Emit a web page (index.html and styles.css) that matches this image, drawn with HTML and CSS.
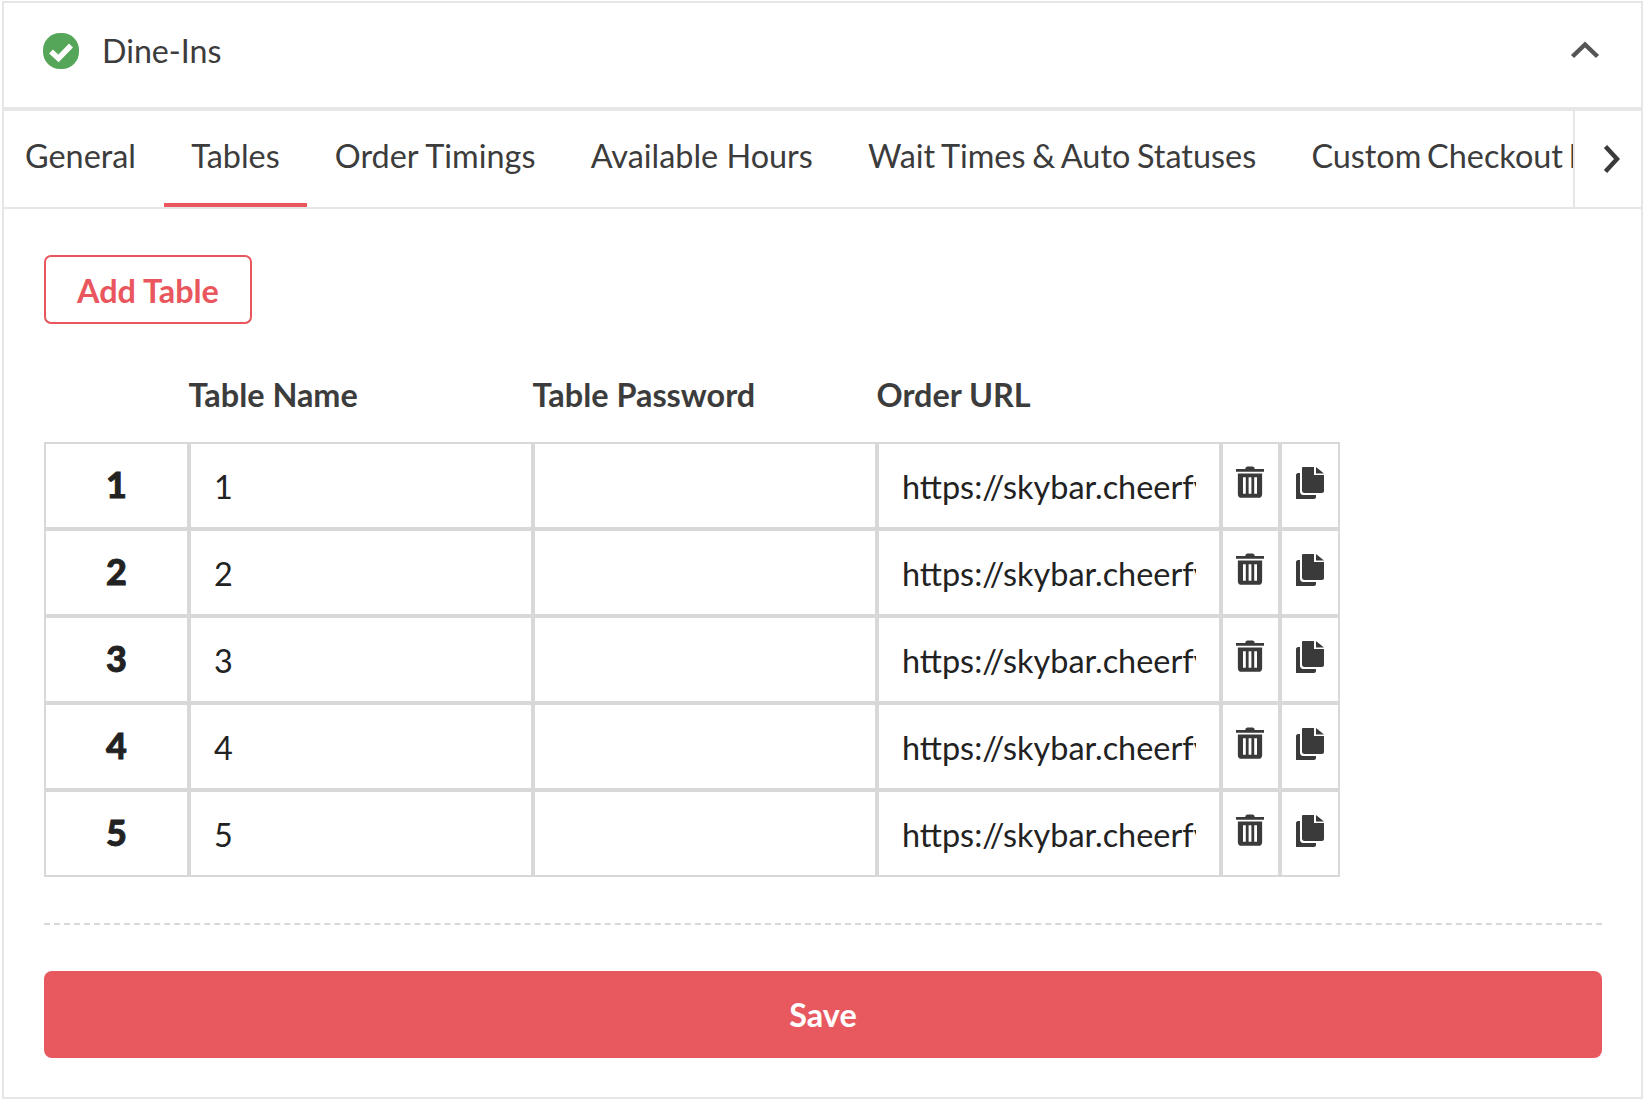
FILE: index.html
```html
<!DOCTYPE html>
<html lang="en">

<head>
    <meta charset="UTF-8">
    <title>Dine-Ins</title>
    <link rel="stylesheet" href="styles.css">
</head>

<body>
    <svg class="icon-defs" width="0" height="0">
        <symbol id="trash" viewBox="0 0 30 34">
            <path d="M10 3 C10 1.500 11 0.500 12.500 0.500 H17.500 C19 0.500 20 1.500 20 3 H30 V6 H0 V3 Z" />
            <path fill-rule="evenodd" d="M2 8 H28 V30 C28 32.500 26.500 34 24 34 H6 C3.500 34 2 32.500 2 30 Z M7.500 12 V29.500 H10.500 V12 Z M13.500 12 V29.500 H16.500 V12 Z M19.500 12 V29.500 H22.500 V12 Z" />
        </symbol>
        <symbol id="copy" viewBox="0 0 28 32">
            <path d="M7 0 H18 V8 H28 V24 C28 25 27 26 26 26 H8.500 C7 26 6 25 6 23.500 V1 C6 0.500 6.500 0 7 0 Z" />
            <path d="M20 0 L28 6.500 H20 Z" />
            <path d="M0 8 C0 7 1 6 2 6 H4 V25 C4 26.500 5.500 28 7 28 H20 V30 C20 31 19 32 18 32 H0 Z" />
        </symbol>
    </svg>

    <div class="card">
        <div class="card-header">
            <svg class="check-icon" viewBox="0 0 36 36">
                <rect width="36" height="36" rx="17" fill="#55a658" />
                <path d="M8 18.500 L15.500 25.500 L28 12.500" fill="none" stroke="#fff" stroke-width="5.500" />
            </svg>
            <span class="card-title">Dine-Ins</span>
            <svg class="chevron-up" viewBox="0 0 30 18">
                <path d="M2.500 15.500 L15 3.500 L27.500 15.500" fill="none" stroke="#555" stroke-width="4.500" />
            </svg>
        </div>

        <div class="tabs">
            <div class="tab-list">
                <a class="tab">General</a>
                <a class="tab active">Tables</a>
                <a class="tab">Order Timings</a>
                <a class="tab">Available Hours</a>
                <a class="tab tab-tight">Wait Times &amp; Auto Statuses</a>
                <a class="tab tab-tight">Custom Checkout Fields</a>
            </div>
            <div class="tab-next">
                <svg viewBox="0 0 18 30">
                    <path d="M3.500 2.500 L15 15 L3.500 27.500" fill="none" stroke="#3a3a3a" stroke-width="4.500" />
                </svg>
            </div>
        </div>

        <div class="card-body">
            <button type="button" class="add-button">Add Table</button>

            <div class="table-head">
                <span class="col-name">Table Name</span>
                <span class="col-password">Table Password</span>
                <span class="col-url">Order URL</span>
            </div>

            <div class="table-rows">
                <div class="table-row">
                    <div class="cell cell-num">1</div>
                    <div class="cell col-name"><input type="text" value="1"></div>
                    <div class="cell col-password"><input type="text"></div>
                    <div class="cell col-url"><input type="text" value="https://skybar.cheerfy.com/table/1"></div>
                    <div class="cell cell-icon cell-trash"><svg><use href="#trash" /></svg></div>
                    <div class="cell cell-icon cell-copy"><svg><use href="#copy" /></svg></div>
                </div>
                <div class="table-row">
                    <div class="cell cell-num">2</div>
                    <div class="cell col-name"><input type="text" value="2"></div>
                    <div class="cell col-password"><input type="text"></div>
                    <div class="cell col-url"><input type="text" value="https://skybar.cheerfy.com/table/2"></div>
                    <div class="cell cell-icon cell-trash"><svg><use href="#trash" /></svg></div>
                    <div class="cell cell-icon cell-copy"><svg><use href="#copy" /></svg></div>
                </div>
                <div class="table-row">
                    <div class="cell cell-num">3</div>
                    <div class="cell col-name"><input type="text" value="3"></div>
                    <div class="cell col-password"><input type="text"></div>
                    <div class="cell col-url"><input type="text" value="https://skybar.cheerfy.com/table/3"></div>
                    <div class="cell cell-icon cell-trash"><svg><use href="#trash" /></svg></div>
                    <div class="cell cell-icon cell-copy"><svg><use href="#copy" /></svg></div>
                </div>
                <div class="table-row">
                    <div class="cell cell-num">4</div>
                    <div class="cell col-name"><input type="text" value="4"></div>
                    <div class="cell col-password"><input type="text"></div>
                    <div class="cell col-url"><input type="text" value="https://skybar.cheerfy.com/table/4"></div>
                    <div class="cell cell-icon cell-trash"><svg><use href="#trash" /></svg></div>
                    <div class="cell cell-icon cell-copy"><svg><use href="#copy" /></svg></div>
                </div>
                <div class="table-row">
                    <div class="cell cell-num">5</div>
                    <div class="cell col-name"><input type="text" value="5"></div>
                    <div class="cell col-password"><input type="text"></div>
                    <div class="cell col-url"><input type="text" value="https://skybar.cheerfy.com/table/5"></div>
                    <div class="cell cell-icon cell-trash"><svg><use href="#trash" /></svg></div>
                    <div class="cell cell-icon cell-copy"><svg><use href="#copy" /></svg></div>
                </div>
            </div>

            <div class="divider"></div>

            <button type="button" class="save-button">Save</button>
        </div>
    </div>
</body>

</html>
```

FILE: styles.css
```css
body {
    font-family: Lato, sans-serif;
    background-color: #fff;
    color: #3c3c3c;
    margin: 0;
    padding: 1px 2px;
}

.icon-defs {
    display: block;
    height: 0;
}

.card {
    height: 1098px;
    box-sizing: border-box;
    border: 2px solid #e6e6e6;
}

.card-header {
    height: 104px;
    display: flex;
    align-items: center;
    padding: 0 39px;
    border-bottom: 4px solid #e6e6e6;
}

.check-icon {
    width: 36px;
    height: 36px;
    margin-right: 23px;
    margin-top: -8px;
}

.card-title {
    font-size: 32.2px;
    flex: 1;
    margin-top: -10px;
}

.chevron-up {
    width: 30px;
    height: 18px;
    margin-right: 2px;
    margin-top: -10px;
}

.tabs {
    display: flex;
    height: 96px;
    border-bottom: 2px solid #e6e6e6;
}

.tab-list {
    flex: 1;
    display: flex;
    overflow: hidden;
    border-right: 2px solid #e6e6e6;
}

.tab {
    flex: none;
    padding: 0 27.6px;
    line-height: 90px;
    height: 92px;
    font-size: 32.4px;
    border-bottom: 4px solid transparent;
}

.tab:first-child {
    padding-left: 21px;
}

.tab.active {
    border-bottom-color: #e9565e;
}

.tab-tight {
    word-spacing: -1.6px;
}

.tab-tight:last-child {
    word-spacing: -2.6px;
}

.tab-next {
    width: 61px;
    padding-left: 5px;
    display: flex;
    align-items: center;
    justify-content: center;
}

.tab-next svg {
    width: 18px;
    height: 30px;
}

.card-body {
    padding: 46px 39px 0 40px;
}

.add-button {
    display: block;
    width: 208px;
    height: 69px;
    padding-top: 3px;
    background-color: #fff;
    border: 2px solid #e9565e;
    border-radius: 7px;
    color: #e9565e;
    font-family: Lato, sans-serif;
    font-size: 32.4px;
    font-weight: 700;
}

.table-head {
    display: flex;
    padding-left: 144.5px;
    margin-top: 51px;
    margin-bottom: 27px;
    height: 40px;
    line-height: 40px;
    font-size: 32.4px;
    font-weight: 700;
}

.table-head span {
    width: 344px;
    box-sizing: border-box;
}

.table-rows {
    width: 1297px;
}

.table-row {
    display: flex;
    height: 87px;
}

.cell {
    box-sizing: border-box;
    border: 2px solid #d8d8d8;
    display: flex;
    align-items: center;
}

.cell-num {
    width: 145px;
    justify-content: center;
    font-size: 36px;
    font-weight: 900;
    color: #222;
    padding-bottom: 4px;
    -webkit-text-stroke: 0.8px #222;
}

.cell.col-name,
.cell.col-password,
.cell.col-url {
    width: 344px;
}

.cell input {
    width: 100%;
    min-width: 0;
    box-sizing: border-box;
    border: none;
    outline: none;
    padding: 2px 23px 0 23px;
    font-family: Lato, sans-serif;
    font-size: 32.4px;
    color: #222;
    background: transparent;
}

.cell-icon {
    width: 59px;
    justify-content: center;
}

.cell-copy {
    width: 60px;
}

.cell-icon svg {
    width: 28px;
    height: 34px;
    fill: #3a3a3a;
    margin-top: -6px;
}

.cell-trash svg {
    margin-left: -2px;
    margin-top: -7px;
}

.divider {
    border-top: 2px dashed #d8d8d8;
    margin-top: 46px;
}

.save-button {
    display: block;
    width: 100%;
    height: 87px;
    margin-top: 46px;
    background-color: #e8595f;
    border: none;
    border-radius: 8px;
    color: #fff;
    font-family: Lato, sans-serif;
    font-size: 32.4px;
    font-weight: 700;
}
```
